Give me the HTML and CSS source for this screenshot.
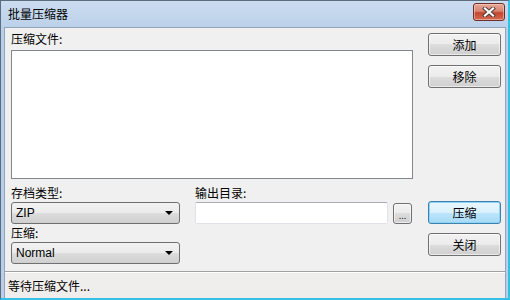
FILE: index.html
```html
<!doctype html>
<html lang="zh-CN">
  <head>
    <meta charset="UTF-8" />
    <title>批量压缩器</title>
    <link rel="stylesheet" href="styles.css">
  </head>
  <body>
    <div class="window">
      <div class="titlebar">
        <span class="title">批量压缩器</span>
        <button class="close-btn" aria-label="关闭">
          <svg width="14" height="10" viewBox="0 0 14 10">
            <path d="M3 1.5 L11 8.5 M11 1.5 L3 8.5" stroke="#4a3a38" stroke-width="4" stroke-linecap="square" />
            <path d="M3 1.5 L11 8.5 M11 1.5 L3 8.5" stroke="#ffffff" stroke-width="2.2" stroke-linecap="square" />
          </svg>
        </button>
      </div>

      <div class="client">
        <div class="main">
          <div class="left">
            <div class="label">压缩文件:</div>
            <div class="listbox"></div>

            <div class="options">
              <div class="field">
                <div class="label">存档类型:</div>
                <div class="combo"><span>ZIP</span><i class="arrow"></i></div>
                <div class="label">压缩:</div>
                <div class="combo"><span>Normal</span><i class="arrow"></i></div>
              </div>
              <div class="field">
                <div class="label">输出目录:</div>
                <div class="path-row">
                  <input class="textbox" type="text" />
                  <button class="btn browse-btn">...</button>
                </div>
              </div>
            </div>
          </div>

          <div class="right">
            <button class="btn">添加</button>
            <button class="btn">移除</button>
            <button class="btn default-btn spaced">压缩</button>
            <button class="btn">关闭</button>
          </div>
        </div>

        <div class="statusbar">等待压缩文件...</div>
      </div>
    </div>
  </body>
</html>
```

FILE: styles.css
```css
body {
  margin: 0;
  font-family: "Liberation Sans", "Noto Sans CJK SC", sans-serif;
  font-size: 12px;
  color: #000;
  background: #fff;
}

.window {
  width: 510px;
  height: 300px;
  box-sizing: border-box;
  border: 1px solid #5b6b80;
  border-right: 2px solid #35c1e4;
  border-bottom: 2px solid #35c1e4;
  background: linear-gradient(#cbdcef, #b9cfe9 30px, #b9cfe9);
  display: flex;
  flex-direction: column;
  padding: 0 2px 0 3px;
}

.titlebar {
  height: 26px;
  display: flex;
  align-items: center;
  justify-content: space-between;
  padding-left: 4px;
  flex-shrink: 0;
}

.title {
  font-family: "Noto Sans CJK SC", sans-serif;
  font-size: 12px;
  line-height: 16px;
  margin-top: -1px;
}

.close-btn {
  width: 32px;
  height: 18px;
  margin-top: -4px;
  margin-right: 1px;
  padding: 0;
  border: 1px solid #6c2f28;
  border-radius: 3px;
  background: linear-gradient(#e8a898, #d88370 45%, #c4442f 55%, #d56c52);
  box-shadow: inset 0 0 0 1px rgba(255, 220, 210, 0.5);
  display: flex;
  align-items: center;
  justify-content: center;
}

.client {
  flex: 1;
  background: #f0f0f0;
  border: 1px solid #93a4bb;
  border-bottom: none;
  display: flex;
  flex-direction: column;
}

.main {
  flex: 1;
  display: flex;
  padding: 1px 0 0 6px;
  gap: 15px;
}

.left {
  width: 402px;
}

.label {
  font-family: "Noto Sans CJK SC", sans-serif;
  line-height: 16px;
  height: 16px;
}

.left > .label {
  margin-top: 2px;
  margin-bottom: 3px;
}

.listbox {
  height: 127px;
  background: #fff;
  border: 1px solid #828790;
}

.options {
  display: grid;
  grid-template-columns: 169px 1fr;
  column-gap: 15px;
  margin-top: 6px;
}

.field .label {
  margin-bottom: 1px;
}

.combo {
  height: 22px;
  box-sizing: border-box;
  border: 1px solid #707070;
  border-radius: 3px;
  background: linear-gradient(#f2f2f2, #ebebeb 50%, #dddddd 50%, #cfcfcf);
  display: flex;
  align-items: center;
  justify-content: space-between;
  padding: 0 6px 0 4px;
  margin-bottom: 1px;
  font-size: 12px;
}

.arrow {
  width: 0;
  height: 0;
  border-left: 4px solid transparent;
  border-right: 4px solid transparent;
  border-top: 4px solid #000;
}

.path-row {
  display: flex;
  align-items: center;
  gap: 5px;
}

.textbox {
  width: 193px;
  height: 22px;
  box-sizing: border-box;
  margin: 0;
  border: 1px solid #e2e3ea;
  border-top-color: #abadb3;
  border-radius: 2px;
  background: #fff;
}

.btn {
  height: 23px;
  box-sizing: border-box;
  padding: 0;
  border: 1px solid #707070;
  border-radius: 3px;
  background: linear-gradient(#f2f2f2, #ebebeb 50%, #dddddd 50%, #cfcfcf);
  box-shadow: inset 0 0 0 1px rgba(255, 255, 255, 0.6);
  font-family: "Noto Sans CJK SC", sans-serif;
  font-size: 12px;
  color: #000;
}

.browse-btn {
  width: 19px;
  height: 21px;
  font-size: 9px;
  line-height: 9px;
  color: #333;
  padding-top: 5px;
}

.right {
  width: 73px;
  display: flex;
  flex-direction: column;
  gap: 9px;
  padding-top: 4px;
}

.right .spaced {
  margin-top: 104px;
}

.default-btn {
  border-color: #3c7fb1;
  background: linear-gradient(#eaf6fd, #d9f0fc 50%, #bee6fd 50%, #a7d9f5);
  box-shadow: inset 0 0 0 1px #8fd3f5;
}

.statusbar {
  height: 27px;
  box-sizing: border-box;
  border-top: 1px solid #a0a0a0;
  box-shadow: inset 0 1px 0 #fff;
  background: #f0eeec;
  padding-left: 3px;
  display: flex;
  align-items: center;
  font-family: "Noto Sans CJK SC", sans-serif;
}
```
